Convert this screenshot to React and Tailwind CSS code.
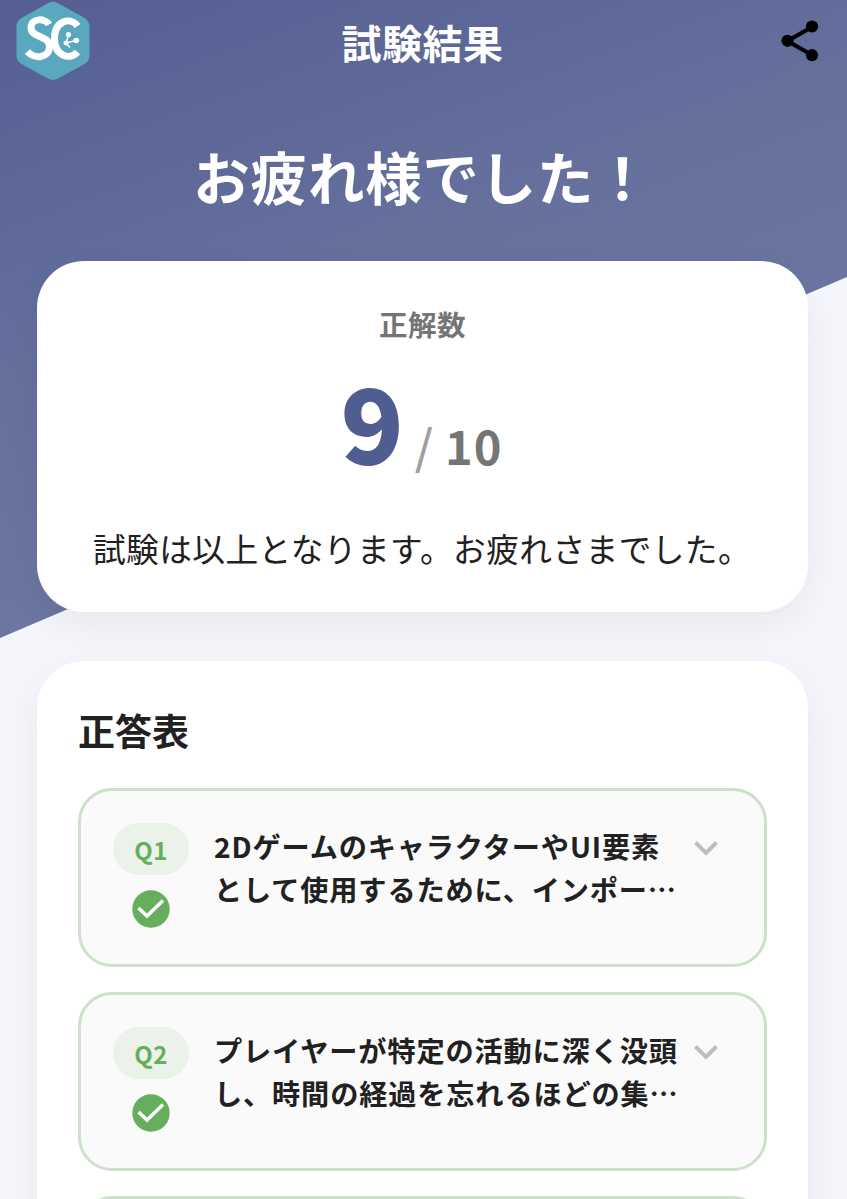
import React from 'react'

const questions = [
    { id: 1, lines: ['2DゲームのキャラクターやUI要素', 'として使用するために、インポー…'] },
    { id: 2, lines: ['プレイヤーが特定の活動に深く没頭', 'し、時間の経過を忘れるほどの集…'] },
]

function Logo() {
    return (
        <svg className="w-[74px] h-[80px] mt-px" viewBox="0 0 74 80" fill="none">
            <path
                d="M32 2.2Q37 -.6 42 2.2L68.5 17Q73.5 20 73.5 25.5V54.5Q73.5 60 68.5 63L42 77.5Q37 80.3 32 77.5L5.5 63Q.5 60 .5 54.5V25.5Q.5 20 5.5 17Z"
                fill="#59a8bd"
            />
            <path
                d="M33 23.500C29.500 17.500 15 16 15 27C15 37 33.500 34 33.500 45.500C33.500 57.500 18 58.500 11.500 50.500"
                stroke="white"
                strokeWidth="7"
            />
            <path
                d="M61.500 25C54.500 15.500 38.500 19.500 38.500 37.500C38.500 55.500 54.500 59.500 61.500 51"
                stroke="white"
                strokeWidth="7"
            />
            <path d="M52.500 34L50 42L60 39.500M50 42L54 46.500" stroke="white" strokeWidth="1.400" />
            <circle cx="52.500" cy="33.500" r="2.600" fill="white" />
            <circle cx="60.300" cy="39.500" r="2.800" fill="white" />
            <circle cx="50" cy="42" r="2.500" fill="white" />
        </svg>
    )
}

function ShareIcon() {
    return (
        <svg className="w-[38px] h-[42px]" viewBox="0 0 38 42">
            <path d="M31 7L6.500 21L31 35" fill="none" stroke="black" strokeWidth="4.200" />
            <circle cx="31" cy="6.500" r="6.100" />
            <circle cx="6.500" cy="20.800" r="6.100" />
            <circle cx="31" cy="35.200" r="6.100" />
        </svg>
    )
}

function QuestionRow({ question }) {
    return (
        <div className="flex items-start h-[179px] border-3 border-[#cde1ca] rounded-[34px] bg-[#fafafa] pl-[32px] pt-[32px]">
            <div className="flex flex-col items-center w-[76px]">
                <div className="w-[76px] h-[52px] rounded-full bg-[#eaf2e9] text-center text-[#65af5c] text-[24px] leading-[54px] font-bold tracking-[0.500px]">
                    Q{question.id}
                </div>
                <svg className="w-[38px] h-[38px] mt-[15px]" viewBox="0 0 38 38">
                    <circle cx="19" cy="19" r="18.700" fill="#66ae5d" />
                    <path d="M6.500 18L15 26L31 10.500" fill="none" stroke="white" strokeWidth="3.500" />
                </svg>
            </div>
            <div className="ml-[25px] mt-[2px] w-[471px] text-[28.200px] leading-[42.500px] font-bold tracking-[0.850px] text-[#212121] whitespace-nowrap">
                {question.lines.map((line, i) => (
                    <p key={i}>{line}</p>
                ))}
            </div>
            <svg className="w-[26px] h-[17px] ml-[8px] mt-[17px]" viewBox="0 0 26 17">
                <path d="M2.500 2.500L13 13L23.500 2.500" fill="none" stroke="#bdbdbd" strokeWidth="4" />
            </svg>
        </div>
    )
}

export default function App() {
    return (
        <div className="grid w-full h-[1199px] overflow-hidden bg-[#f5f6fb] font-['Noto_Sans_CJK_JP',sans-serif]">
            {/* Slanted header background */}
            <div className="col-start-1 row-start-1 h-[638px] bg-linear-[160deg,#545e92_0%,#65709d_40%,#727da8_100%] [clip-path:polygon(0_0,100%_0,100%_277px,0_638px)]" />

            <div className="col-start-1 row-start-1 z-10">
                <header className="flex items-start justify-between h-[84px] pl-[16px] pr-[28px]">
                    <Logo />
                    <h1 className="mt-[12px] ml-[2px] text-[40px] leading-[60px] font-bold tracking-[0.500px] text-white">試験結果</h1>
                    <div className="w-[66px] flex justify-end pt-[20px]">
                        <ShareIcon />
                    </div>
                </header>

                <h2 className="mt-[50px] mr-[2px] text-center text-[56.400px] leading-[84px] font-bold tracking-[0.900px] text-white">お疲れ様でした！</h2>

                <main className="flex flex-col gap-[49px] mt-[43px] pl-[37px] pr-[39px]">
                    <section className="h-[351px] rounded-[47px] bg-white pt-[42px] text-center shadow-[0_12px_36px_rgba(0,0,0,0.060)]">
                        <p className="text-[28.500px] leading-[42px] font-bold tracking-[0.500px] text-[#757575]">正解数</p>
                        <div className="flex justify-center items-baseline h-[150px] leading-[150px]">
                            <span className="text-[104px] font-black text-[#4f5d90]">9</span>
                            <span className="ml-[11px] text-[47px] font-medium text-[#9e9e9e]">/</span>
                            <span className="ml-[12px] mr-[2px] text-[47px] font-bold tracking-[1px] text-[#757575]">10</span>
                        </div>
                        <p className="mt-[28px] pl-[56px] text-left text-[32.700px] leading-[50px] tracking-[0.430px] whitespace-nowrap text-[#212121]">
                            試験は以上となります。お疲れさまでした。
                        </p>
                    </section>

                    <section className="rounded-t-[47px] bg-white px-[41px] pt-[41px] shadow-[0_12px_36px_rgba(0,0,0,0.060)]">
                        <h3 className="text-[37px] leading-[56px] font-bold text-[#212121]">正答表</h3>
                        <div className="flex flex-col gap-[25px] mt-[30px]">
                            {questions.map((q) => (
                                <QuestionRow key={q.id} question={q} />
                            ))}
                            <div className="h-[179px] border-3 border-[#cde1ca] rounded-[34px] bg-[#fafafa]" />
                        </div>
                    </section>
                </main>
            </div>
        </div>
    )
}
